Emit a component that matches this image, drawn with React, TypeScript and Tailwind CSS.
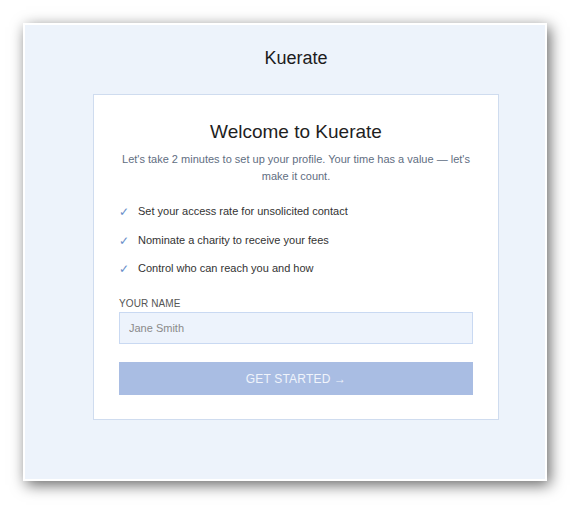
// Onboarding welcome card for Kuerate
import { useState } from "react"

const FEATURES = [
  "Set your access rate for unsolicited contact",
  "Nominate a charity to receive your fees",
  "Control who can reach you and how",
]

const App = () => {
  const [name, setName] = useState("")

  return (
    <div className="min-h-[505px] w-[570px] bg-white pl-[23px] pt-[23px] font-['Liberation_Sans',Arial,sans-serif]">
      <div className="h-[458px] w-[524px] border-2 border-white bg-[#edf3fb] shadow-[3px_4px_14px_rgba(0,0,0,0.6)]">
        <div className="ml-[68px] w-[406px] pt-[22px]">
          <h1 className="text-center text-[18px] leading-[22px] text-[#1c1c1c]">Kuerate</h1>

          {/* Card */}
          <div className="mt-[25px] border border-[#cfdcef] bg-white px-[25px] pb-[24px] pt-[25px]">
            <h2 className="text-center text-[19px] leading-[24px] text-[#1f1f1f]">Welcome to Kuerate</h2>
            <p className="mt-[7px] text-center text-[11px] leading-[17px] text-[#5f6e82]">
              Let's take 2 minutes to set up your profile. Your time has a value — let's make it count.
            </p>

            <ul className="mt-[18px] flex flex-col gap-[11.5px]">
              {FEATURES.map((f) => (
                <li key={f} className="flex items-center text-[11px] leading-[17px] text-[#333]">
                  <span className="w-[19px] translate-y-[1px] text-[12px] text-[#6a90c9]">✓</span>
                  {f}
                </li>
              ))}
            </ul>

            <label htmlFor="name" className="mt-[21px] block text-[10px] leading-[12px] tracking-[0.1px] text-[#555]">
              YOUR NAME
            </label>
            <input
              id="name"
              type="text"
              placeholder="Jane Smith"
              value={name}
              onChange={(e) => setName(e.target.value)}
              className="mt-[2px] h-[32px] w-full border border-[#c9d9f2] bg-[#edf3fc] px-[9px] text-[11px] text-[#333] outline-none placeholder:text-[#8a8a8a]"
            />

            <button
              type="button"
              className="mt-[18px] flex h-[33px] w-full items-center justify-center bg-[#a9bde3] text-[12px] tracking-[0.2px] text-[#f0f4fb]"
            >
              GET STARTED →
            </button>
          </div>
        </div>
      </div>
    </div>
  )
}

export default App
